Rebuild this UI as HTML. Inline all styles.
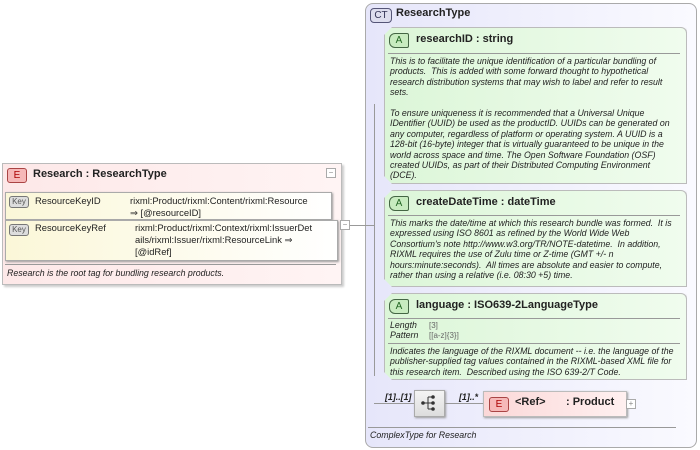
<!DOCTYPE html>
<html><head><style>
body{margin:0;width:700px;height:450px;background:#fff;position:relative;overflow:hidden;font-family:"Liberation Sans",sans-serif;}
.a{position:absolute}
.t{font-size:8.8px;font-style:italic;color:#222;line-height:10.4px}
.hd{font-weight:bold;font-size:11px;color:#222}
.lbl{position:absolute;border:1px solid #777;border-radius:3px;font-size:10px;text-align:center;line-height:13px;height:13px}
.abox{position:absolute;left:384px;width:301px;border:1px solid #bbb;border-radius:0 6px 0 0;background:linear-gradient(90deg,#dcf6d8,#f0fcee);box-shadow:2px 2px 2px #ccc;clip-path:polygon(8px 0,100% 0,100% 100%,8px 100%,0 calc(100% - 8px),0 8px)}
.sep{position:absolute;height:1px;background:#999}
.mini{position:absolute;width:8px;height:8px;border:1px solid #aaa;background:#fff;font-size:8px;line-height:8px;text-align:center;color:#888}
</style></head><body>
<div class="a" style="left:341px;top:225px;width:33px;height:1px;background:#999"></div>
<div class="a" style="left:374px;top:104px;width:1px;height:272px;background:#999"></div>
<div class="a" style="left:2px;top:163px;width:338px;height:120px;border:1px solid #bbb;background:linear-gradient(90deg,#fde8e8,#fff4f4);box-shadow:2px 2px 2px #ccc"></div>
<div class="lbl" style="left:7px;top:168px;width:18px;background:#f6b8b8;border-color:#a44;color:#a00">E</div>
<div class="a hd" style="left:33px;top:168px">Research : ResearchType</div>
<div class="mini" style="left:326px;top:168px">−</div>
<div class="a" style="left:5px;top:192px;width:325px;height:26px;border:1px solid #aaa;background:linear-gradient(90deg,#fbf7d8,#fff);box-shadow:1px 1px 2px #999"></div>
<div class="lbl" style="left:9px;top:196px;width:18px;height:10px;line-height:10px;font-size:8px;background:#ddd;color:#555">Key</div>
<div class="a" style="left:35px;top:195px;font-size:9.4px;color:#222">ResourceKeyID</div>
<div class="a" style="left:130px;top:195px;font-size:9.4px;color:#222;line-height:12px">rixml:Product/rixml:Content/rixml:Resource<br>⇒ [@resourceID]</div>
<div class="a" style="left:5px;top:220px;width:331px;height:39px;border:1px solid #aaa;background:linear-gradient(90deg,#fbf7d8,#fff);box-shadow:1px 1px 2px #999"></div>
<div class="lbl" style="left:9px;top:224px;width:18px;height:10px;line-height:10px;font-size:8px;background:#ddd;color:#555">Key</div>
<div class="a" style="left:35px;top:222px;font-size:9.4px;color:#222">ResourceKeyRef</div>
<div class="a" style="left:135px;top:222px;font-size:9.4px;color:#222;line-height:12px">rixml:Product/rixml:Context/rixml:IssuerDet<br>ails/rixml:Issuer/rixml:ResourceLink ⇒<br>[@idRef]</div>
<div class="mini" style="left:340px;top:220px">−</div>
<div class="sep" style="left:5px;top:264px;width:331px"></div>
<div class="a t" style="left:7px;top:268px">Research is the root tag for bundling research products.</div>
<div class="a" style="left:365px;top:3px;width:330px;height:443px;border:1px solid #aaa;border-radius:8px;background:linear-gradient(90deg,#e6e6fa,#fafaff);z-index:-1"></div>
<div class="lbl" style="left:370px;top:8px;width:20px;background:#dde;border-color:#557;border-radius:4px;color:#335">CT</div>
<div class="a hd" style="left:396px;top:7px">ResearchType</div>
<div class="abox" style="top:27px;height:155px"></div>
<div class="lbl" style="left:389px;top:33px;width:18px;background:#c8ecc0;border-color:#464;color:#262;border-radius:6px 2px 2px 6px">A</div>
<div class="a hd" style="left:416px;top:33px">researchID : string</div>
<div class="sep" style="left:388px;top:53px;width:292px"></div>
<div class="a t" style="left:390px;top:56px">This is to facilitate the unique identification of a particular bundling of<br>products.&nbsp; This is added with some forward thought to hypothetical<br>research distribution systems that may wish to label and refer to result<br>sets.<br><br>To ensure uniqueness it is recommended that a Universal Unique<br>IDentifier (UUID) be used as the productID. UUIDs can be generated on<br>any computer, regardless of platform or operating system. A UUID is a<br>128-bit (16-byte) integer that is virtually guaranteed to be unique in the<br>world across space and time. The Open Software Foundation (OSF)<br>created UUIDs, as part of their Distributed Computing Environment<br>(DCE).</div>
<div class="abox" style="top:190px;height:95px"></div>
<div class="lbl" style="left:389px;top:196px;width:18px;background:#c8ecc0;border-color:#464;color:#262;border-radius:6px 2px 2px 6px">A</div>
<div class="a hd" style="left:416px;top:196px">createDateTime : dateTime</div>
<div class="sep" style="left:388px;top:215px;width:292px"></div>
<div class="a t" style="left:390px;top:218px">This marks the date/time at which this research bundle was formed.&nbsp; It is<br>expressed using ISO 8601 as refined by the World Wide Web<br>Consortium's note http://www.w3.org/TR/NOTE-datetime.&nbsp; In addition,<br>RIXML requires the use of Zulu time or Z-time (GMT +/- n<br>hours:minute:seconds).&nbsp; All times are absolute and easier to compute,<br>rather than using a relative (i.e. 08:30 +5) time.</div>
<div class="abox" style="top:293px;height:85px"></div>
<div class="lbl" style="left:389px;top:299px;width:18px;background:#c8ecc0;border-color:#464;color:#262;border-radius:6px 2px 2px 6px">A</div>
<div class="a hd" style="left:416px;top:299px">language : ISO639-2LanguageType</div>
<div class="sep" style="left:388px;top:318px;width:292px"></div>
<div class="a t" style="left:390px;top:321px;line-height:9.5px">Length<br>Pattern</div>
<div class="a" style="left:429px;top:321px;font-size:8px;color:#666;line-height:9.5px">[3]<br>[[a-z]{3}]</div>
<div class="sep" style="left:388px;top:343px;width:292px"></div>
<div class="a t" style="left:390px;top:346px">Indicates the language of the RIXML document -- i.e. the language of the<br>publisher-supplied tag values contained in the RIXML-based XML file for<br>this research item.&nbsp; Described using the ISO 639-2/T Code.</div>
<div class="a" style="left:374px;top:403px;width:110px;height:1px;background:#999"></div>
<div class="a t" style="left:385px;top:392px;font-weight:bold">[1]..[1]</div>
<div class="a" style="left:414px;top:390px;width:29px;height:25px;border:1px solid #aaa;background:linear-gradient(#f4f4f4,#ddd);box-shadow:1px 1px 2px #999"></div>
<svg class="a" style="left:420px;top:394px" width="18" height="18"><circle cx="3" cy="9" r="1.8" fill="#333"/><line x1="4" y1="9" x2="8" y2="9" stroke="#333"/><line x1="8" y1="3" x2="8" y2="15" stroke="#333"/><line x1="8" y1="3" x2="12" y2="3" stroke="#333"/><line x1="8" y1="15" x2="12" y2="15" stroke="#333"/><line x1="8" y1="9" x2="12" y2="9" stroke="#333"/><circle cx="13" cy="3" r="1.8" fill="#333"/><circle cx="13" cy="9" r="1.8" fill="#333"/><circle cx="13" cy="15" r="1.8" fill="#333"/></svg>
<div class="a t" style="left:459px;top:392px;font-weight:bold">[1]..*</div>
<div class="a" style="left:483px;top:391px;width:142px;height:24px;border:1px solid #bbb;background:linear-gradient(90deg,#fbd8d8,#fff0f0);box-shadow:1px 1px 2px #999"></div>
<div class="lbl" style="left:489px;top:397px;width:18px;background:#f6b8b8;border-color:#a44;color:#a00">E</div>
<div class="a hd" style="left:515px;top:396px">&lt;Ref&gt;</div>
<div class="a hd" style="left:566px;top:396px">: Product</div>
<div class="mini" style="left:626px;top:399px">+</div>
<div class="sep" style="left:368px;top:427px;width:308px"></div>
<div class="a t" style="left:370px;top:430px">ComplexType for Research</div>
</body></html>
